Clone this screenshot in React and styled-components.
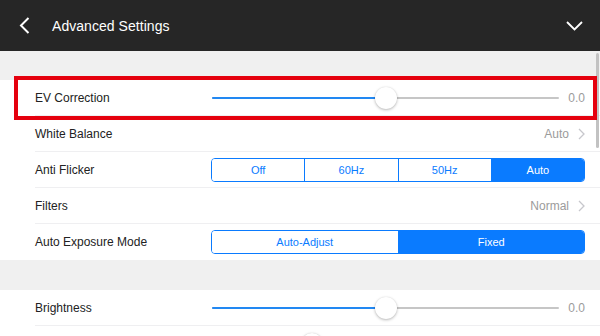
import React from 'react'
import styled, { createGlobalStyle } from 'styled-components'

const GlobalStyle = createGlobalStyle`
  html, body {
    margin: 0;
    padding: 0;
    height: 336px;
    overflow: hidden;
    background: #f0f0f0;
    font-family: "Liberation Sans", Arial, sans-serif;
    -webkit-font-smoothing: antialiased;
  }
`

const BLUE = '#0a7bff'

const Screen = styled.div`
  width: 600px;
  height: 336px;
  overflow: hidden;
  display: flex;
  flex-direction: column;
`

/* ── top bar ── */
const Header = styled.header`
  height: 51px;
  flex: 0 0 51px;
  background: #262626;
  display: flex;
  align-items: center;
  padding: 0 17px 0 19px;
`

const IconButton = styled.span`
  display: flex;
  align-items: center;
  width: ${({ $w }) => $w}px;
  color: #fff;
`

const Title = styled.h1`
  flex: 1;
  margin: 0;
  font-size: 14px;
  font-weight: 400;
  color: #fff;
  letter-spacing: 0.05px;
`

/* ── body ── */
const Content = styled.main`
  position: relative;
  flex: 1;
`

const Band = styled.div`
  height: ${({ $h }) => $h}px;
  background: #f0f0f0;
`

const Group = styled.section`
  background: #fff;
`

const Row = styled.div`
  position: relative;
  display: flex;
  padding-left: 35px;
  background: #fff;
`

const RowInner = styled.div`
  flex: 1;
  height: ${({ $last }) => ($last ? 36 : 35)}px;
  display: flex;
  align-items: center;
  padding-right: 15px;
  border-bottom: ${({ $last }) => ($last ? 'none' : '1px solid #efeff1')};
`

const Label = styled.span`
  flex: 0 0 176px;
  font-size: 12px;
  color: #222;
`

const Control = styled.div`
  flex: 1;
  display: flex;
  align-items: center;
  justify-content: flex-end;
`

const Highlight = styled.div`
  position: absolute;
  left: 14px;
  right: 3px;
  top: -4px;
  bottom: -4px;
  border: 4px solid #e5000e;
  z-index: 2;
  pointer-events: none;
`

/* slider */
const Track = styled.div`
  position: relative;
  flex: 1;
  height: 2px;
  margin: 0 9px 0 1px;
  background: #c6c6c6;
  border-radius: 1px;
`

const Fill = styled.div`
  position: absolute;
  left: 0;
  top: 0;
  bottom: 0;
  background: #2288f2;
  border-radius: 1px;
`

const Thumb = styled.div`
  position: absolute;
  top: 50%;
  width: 22px;
  height: 22px;
  margin: -11px 0 0 -11px;
  border-radius: 50%;
  background: #fff;
  box-shadow: 0 1px 3px rgba(0, 0, 0, 0.28), 0 0 1px rgba(0, 0, 0, 0.1);
`

const Value = styled.span`
  font-size: 12px;
  color: #9b9b9b;
`

/* segmented */
const Segmented = styled.div`
  flex: 1;
  display: flex;
  height: 24px;
  box-sizing: border-box;
  border: 1px solid ${BLUE};
  border-radius: 4px;
  overflow: hidden;
`

const Segment = styled.div`
  flex: 1;
  display: flex;
  align-items: center;
  justify-content: center;
  font-size: 11px;
  color: ${({ $active }) => ($active ? '#fff' : BLUE)};
  background: ${({ $active }) => ($active ? BLUE : '#fff')};
  & + & {
    border-left: 1px solid ${BLUE};
  }
`

/* disclosure */
const Detail = styled.span`
  display: flex;
  align-items: center;
  gap: 9px;
  font-size: 12px;
  color: #9b9b9b;
`

const ScrollIndicator = styled.div`
  position: absolute;
  right: 1px;
  top: 2px;
  width: 3px;
  height: 95px;
  border-radius: 2px;
  background: #c2c2c2;
`

const Slider = ({ value, pos }) => (
  <Control>
    <Track>
      <Fill style={{ width: `${pos * 100}%` }} />
      <Thumb style={{ left: `${pos * 100}%` }} />
    </Track>
    <Value>{value}</Value>
  </Control>
)

const Choice = ({ options, active }) => (
  <Control>
    <Segmented>
      {options.map((o) => (
        <Segment key={o} $active={o === active}>
          {o}
        </Segment>
      ))}
    </Segmented>
  </Control>
)

const Disclosure = ({ value }) => (
  <Control>
    <Detail>
      {value}
      <svg width="7" height="12" viewBox="0 0 7 12" fill="none">
        <path d="M1 1l5 5-5 5" stroke="#c7c7cc" strokeWidth="1.3" />
      </svg>
    </Detail>
  </Control>
)

const Setting = ({ label, children, last, highlighted }) => (
  <Row>
    {highlighted && <Highlight />}
    <RowInner $last={last}>
      <Label>{label}</Label>
      {children}
    </RowInner>
  </Row>
)

export default function App() {
  return (
    <Screen>
      <GlobalStyle />
      <Header>
        <IconButton $w={33}>
          <svg width="11" height="17" viewBox="0 0 11 17" fill="none">
            <path d="M9.5 1L2 8.5 9.5 16" stroke="#fff" strokeWidth="2" />
          </svg>
        </IconButton>
        <Title>Advanced Settings</Title>
        <IconButton $w={17}>
          <svg width="17" height="10" viewBox="0 0 17 10" fill="none">
            <path d="M1 1l7.5 7.5L16 1" stroke="#fff" strokeWidth="1.8" />
          </svg>
        </IconButton>
      </Header>

      <Content>
        <Band $h={29} />
        <Group>
          <Setting label="EV Correction" highlighted>
            <Slider value="0.0" pos={0.5} />
          </Setting>
          <Setting label="White Balance">
            <Disclosure value="Auto" />
          </Setting>
          <Setting label="Anti Flicker">
            <Choice options={['Off', '60Hz', '50Hz', 'Auto']} active="Auto" />
          </Setting>
          <Setting label="Filters">
            <Disclosure value="Normal" />
          </Setting>
          <Setting label="Auto Exposure Mode" last>
            <Choice options={['Auto-Adjust', 'Fixed']} active="Fixed" />
          </Setting>
        </Group>
        <Band $h={30} />
        <Group>
          <Setting label="Brightness">
            <Slider value="0.0" pos={0.5} />
          </Setting>
          <Setting label="Contrast" last>
            <Slider value="0.0" pos={0.287} />
          </Setting>
        </Group>
        <ScrollIndicator />
      </Content>
    </Screen>
  )
}
